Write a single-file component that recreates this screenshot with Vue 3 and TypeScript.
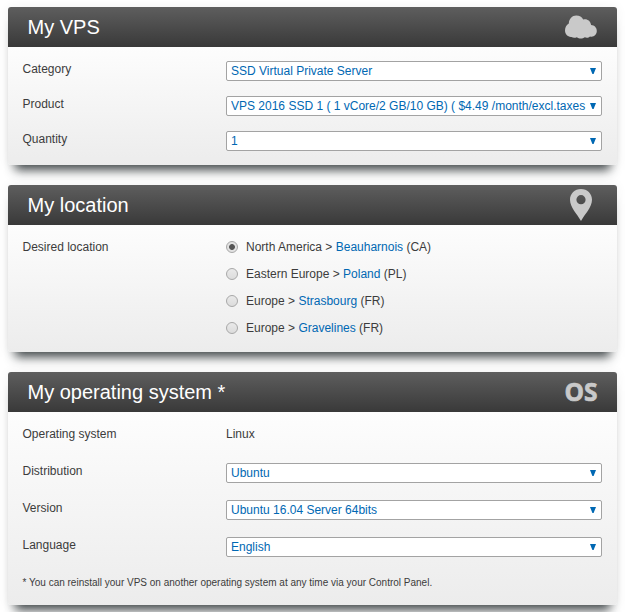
<script setup lang="ts">
import { ref } from 'vue'

interface Field {
  label: string
  value: string
}

interface Place {
  id: string
  region: string
  city: string
  country: string
}

const vpsFields: Field[] = [
  { label: 'Category', value: 'SSD Virtual Private Server' },
  { label: 'Product', value: 'VPS 2016 SSD 1 ( 1 vCore/2 GB/10 GB) ( $4.49 /month/excl.taxes' },
  { label: 'Quantity', value: '1' },
]

const places: Place[] = [
  { id: 'bhs', region: 'North America', city: 'Beauharnois', country: 'CA' },
  { id: 'waw', region: 'Eastern Europe', city: 'Poland', country: 'PL' },
  { id: 'sbg', region: 'Europe', city: 'Strasbourg', country: 'FR' },
  { id: 'gra', region: 'Europe', city: 'Gravelines', country: 'FR' },
]

const osFields: Field[] = [
  { label: 'Distribution', value: 'Ubuntu' },
  { label: 'Version', value: 'Ubuntu 16.04 Server 64bits' },
  { label: 'Language', value: 'English' },
]

const location = ref('bhs')
</script>

<template>
  <main class="page">
    <section class="panel vps">
      <header class="head">
        <h2>My VPS</h2>
        <svg class="icon" width="34" height="26" viewBox="0 0 34 26">
          <path fill="#c9c9c9" d="M4.8 9.6C5 5 8.2 1.6 12.2 1.6C15.6 1.6 17.9 3.1 19.2 5.4C22.8 4.3 26.8 6.6 27.1 11.1C30.4 11.3 32.8 13.7 32.8 17C32.8 20.8 29.4 23.5 26 22.4C24.7 23.8 22.6 24.2 20.8 23.3C18.6 24.9 15 25 12.8 23.2C10.8 24 9 23.9 7.5 22.9C3.8 23.2 1 20.4 1 16.6C1 13.4 2.5 10.9 4.8 9.6Z" />
        </svg>
      </header>
      <div class="body">
        <div v-for="f in vpsFields" :key="f.label" class="row">
          <label>{{ f.label }}</label>
          <div class="pick">
            <select><option>{{ f.value }}</option></select>
            <svg class="arrow" width="6" height="7" viewBox="0 0 6 7"><path d="M0 0H6L3.6 6H2.4Z" fill="#0068b3" /></svg>
          </div>
        </div>
      </div>
    </section>

    <section class="panel place">
      <header class="head">
        <h2>My location</h2>
        <svg class="icon" width="34" height="34" viewBox="0 0 34 34">
          <path fill="#c9c9c9" fill-rule="evenodd" d="M17 1C10.7 1 6 5.7 6 11.8C6 19.4 13.2 26.2 17 33C20.8 26.2 28 19.4 28 11.8C28 5.7 23.3 1 17 1ZM17 7.1A4.6 4.6 0 1 1 17 16.3A4.6 4.6 0 1 1 17 7.1Z" />
        </svg>
      </header>
      <div class="body">
        <div class="row">
          <label>Desired location</label>
          <div class="choices">
            <label v-for="p in places" :key="p.id" class="choice">
              <input v-model="location" type="radio" name="location" :value="p.id" />
              <span>{{ p.region }} &gt; <b>{{ p.city }}</b> ({{ p.country }})</span>
            </label>
          </div>
        </div>
      </div>
    </section>

    <section class="panel system">
      <header class="head">
        <h2>My operating system *</h2>
        <svg class="icon os-icon" width="34" height="36" viewBox="0 0 34 36">
          <text class="os" x="0.5" y="27" textLength="33" lengthAdjust="spacingAndGlyphs">OS</text>
        </svg>
      </header>
      <div class="body">
        <div class="row">
          <label>Operating system</label>
          <span class="plain">Linux</span>
        </div>
        <div v-for="f in osFields" :key="f.label" class="row">
          <label>{{ f.label }}</label>
          <div class="pick">
            <select><option>{{ f.value }}</option></select>
            <svg class="arrow" width="6" height="7" viewBox="0 0 6 7"><path d="M0 0H6L3.6 6H2.4Z" fill="#0068b3" /></svg>
          </div>
        </div>
        <p class="note">* You can reinstall your VPS on another operating system at any time via your Control Panel.</p>
      </div>
    </section>
  </main>
</template>

<style>
body {
  background: #fff;
  overflow: hidden;
}
</style>

<style scoped>
.page {
  box-sizing: border-box;
  height: 612px;
  overflow: hidden;
  padding: 7px 11px 0 8px;
  display: flex;
  flex-direction: column;
  gap: 20px;
  font: 12px/16px "Liberation Sans", Arial, sans-serif;
  color: #3c3c3c;
}
.panel {
  flex: none;
  display: flex;
  flex-direction: column;
  border-radius: 4px 4px 3px 3px;
  box-shadow: 0 12px 10px -7px rgba(45, 52, 54, 0.9), 0 0 12px rgba(0, 0, 0, 0.06);
}
.vps {
  height: 158px;
}
.place {
  height: 167px;
}
.system {
  height: 233px;
}
.head {
  box-sizing: border-box;
  height: 40px;
  padding: 0 19px 0 19.5px;
  display: flex;
  align-items: center;
  justify-content: space-between;
  border-radius: 3px 3px 0 0;
  background: linear-gradient(#5e5e5e, #393939);
}
h2 {
  margin: 0;
  font-size: 20px;
  font-weight: 400;
  line-height: 40px;
  color: #fff;
}
.icon {
  display: block;
}
.os {
  font: 700 25.5px "Open Sans", sans-serif;
  fill: #c9c9c9;
  stroke: #c9c9c9;
  stroke-width: 0.7px;
}
.body {
  box-sizing: border-box;
  flex: 1;
  min-height: 0;
  padding: 14px 15px 0 14.5px;
  background: linear-gradient(#fdfdfd, #ececec);
  border-radius: 0 0 3px 3px;
}
.row {
  display: grid;
  grid-template-columns: 203.5px 376px;
  height: 35px;
}
.system .row {
  height: 37px;
}
.pick {
  position: relative;
  height: 20px;
}
select {
  appearance: none;
  box-sizing: border-box;
  display: block;
  width: 376px;
  height: 20px;
  margin: 0;
  padding: 0 4px;
  border: 1px solid #a3a3a3;
  border-radius: 2px;
  background: #fff;
  color: #0068b3;
  font: inherit;
  outline: none;
}
.arrow {
  position: absolute;
  right: 6px;
  top: 7px;
}
.choices {
  display: flex;
  flex-direction: column;
  gap: 11px;
}
.choice {
  display: flex;
  align-items: center;
  gap: 8px;
  height: 16px;
}
.choice b {
  font-weight: 400;
  color: #0068b3;
}
input {
  appearance: none;
  box-sizing: border-box;
  width: 12px;
  height: 12px;
  margin: 0;
  border: 1px solid #a8a8a8;
  border-radius: 50%;
  background: linear-gradient(#e9e9e9, #dcdcdc);
}
input:checked {
  background: radial-gradient(circle, #555 2.5px, #e2e2e2 3.3px);
}
.note {
  margin: 0;
  padding-top: 2px;
  font-size: 10px;
  line-height: 14px;
}
</style>
